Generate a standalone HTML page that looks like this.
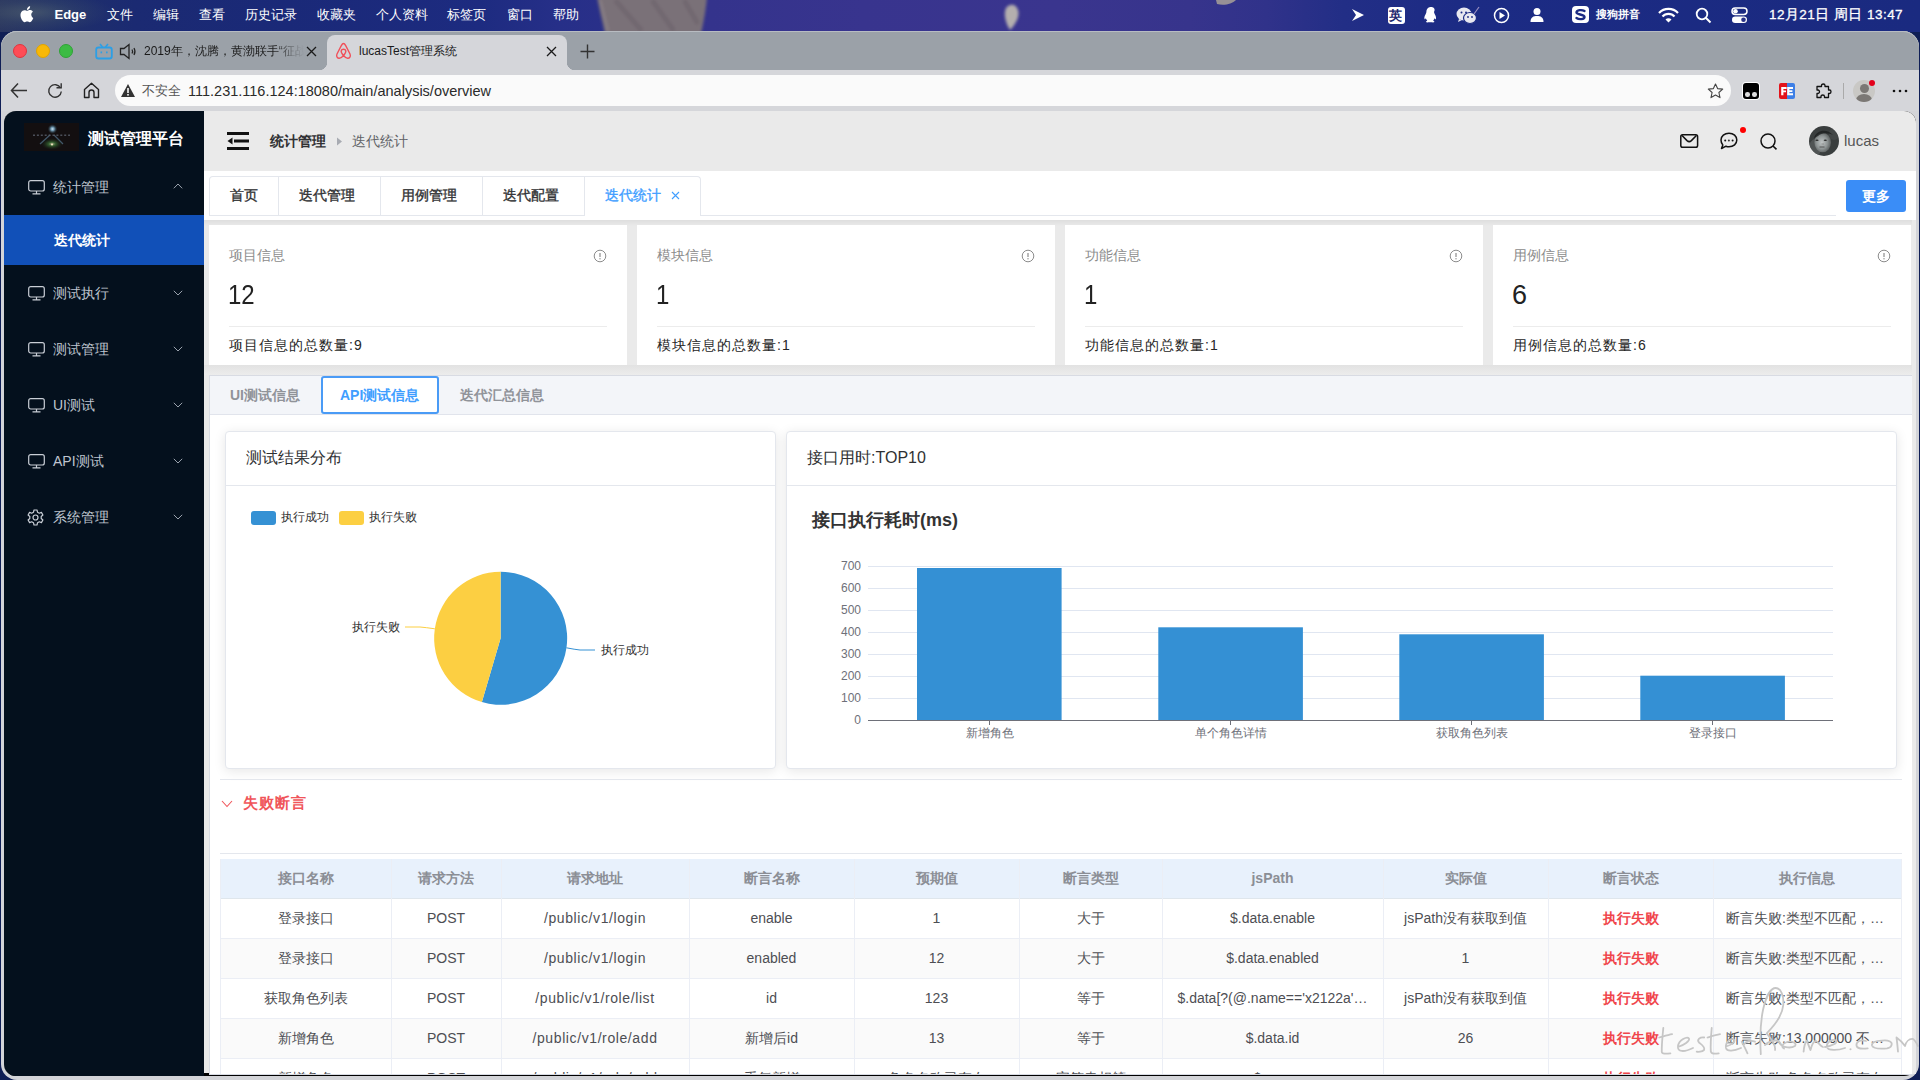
<!DOCTYPE html>
<html><head><meta charset="utf-8">
<style>
*{margin:0;padding:0;box-sizing:border-box}
html,body{width:1920px;height:1080px;overflow:hidden;font-family:"Liberation Sans",sans-serif;background:#0f1e55;position:relative}
.a{position:absolute}
.t{position:absolute;white-space:nowrap;line-height:1}
svg{position:absolute;overflow:visible}
.mb{top:8px;font-size:13px;color:#fff}
.side{color:#bfc5cf;font-size:14px}
.ci{fill:none;stroke:#c9ced6;stroke-width:1.2}
.th{font-weight:bold;color:#8b8e95;font-size:14px}
.td{color:#4d4e53;font-size:14px}
</style></head><body>
<!-- menu bar -->
<div class="a" style="left:0;top:0;width:1920px;height:32px;background:linear-gradient(90deg,#2a3660 0%,#203068 3%,#1b2a72 7%,#1a2978 15%,#1d2b80 25%,#262f88 29%,#2c308a 33%,#34338c 37%,#38348e 45%,#3a358e 55%,#37348c 62%,#30328a 66%,#222e86 70%,#1c2b84 76%,#1a2a80 100%)"></div>
<div class="a" style="left:0;top:0;width:110px;height:31px;background:radial-gradient(ellipse at 30% 40%,rgba(120,140,120,.35) 0%,rgba(80,100,110,.2) 40%,rgba(30,45,110,0) 75%)"></div>
<svg style="left:0;top:0" width="1920" height="31"><defs><filter id="bl" x="-20%" y="-20%" width="140%" height="140%"><feGaussianBlur stdDeviation="1.6"/></filter></defs><g filter="url(#bl)"><path d="M597 -3 H707 C706 8 704 20 701 34 H605 C602 20 599 8 597 -3Z" fill="#7a7178"/><path d="M615 0 L642 31 M652 0 L674 31 M684 0 L698 24" stroke="#6b6169" stroke-width="5" opacity=".55"/><path d="M600 0 L608 31" stroke="#958c94" stroke-width="2" opacity=".6"/></g><path d="M1006 8 C1010 3 1016 4 1018 10 C1020 16 1016 24 1010 30 C1006 24 1003 14 1006 8Z" fill="#c2bdb2" opacity=".9" filter="url(#bl)"/><path d="M1216 0 H1236 C1232 4 1224 6 1217 4Z" fill="#b0a898" opacity=".8"/></svg>
<svg style="left:20.2px;top:5.8px" width="13.6" height="16.2" viewBox="0 0 16 19"><path d="M13.2 10.1c0-2.3 1.9-3.4 2-3.5-1.1-1.6-2.8-1.8-3.4-1.8-1.4-.1-2.8.9-3.5.9-.7 0-1.8-.8-3-.8C3.7 4.9 2.2 5.8 1.4 7.2-.3 10.1 1 14.4 2.6 16.7c.8 1.1 1.7 2.4 2.9 2.3 1.2 0 1.6-.7 3-.7s1.8.7 3 .7c1.3 0 2.1-1.1 2.8-2.3.9-1.3 1.3-2.6 1.3-2.6s-2.4-1-2.4-4zM10.9 3.3c.6-.8 1.1-1.9 1-3-.9 0-2.1.6-2.7 1.4-.6.7-1.1 1.8-1 2.9 1 .1 2.1-.5 2.7-1.3z" fill="#fff"/></svg>
<div class="t mb" style="left:54.5px;font-weight:bold;font-size:13px;top:8px">Edge</div>
<div class="t mb" style="left:107px">文件</div>
<div class="t mb" style="left:153px">编辑</div>
<div class="t mb" style="left:199px">查看</div>
<div class="t mb" style="left:245px">历史记录</div>
<div class="t mb" style="left:317px">收藏夹</div>
<div class="t mb" style="left:376px">个人资料</div>
<div class="t mb" style="left:447px">标签页</div>
<div class="t mb" style="left:507px">窗口</div>
<div class="t mb" style="left:553px">帮助</div>
<div class="t mb" style="left:1769px;font-size:13.5px;letter-spacing:.45px;-webkit-text-stroke:.3px #fff">12月21日 周日 13:47</div>
<div class="t mb" style="left:1596px;font-size:11px;top:9px;font-weight:bold">搜狗拼音</div>
<!-- status icons -->
<svg style="left:1350px;top:8px" width="16" height="14"><path d="M2 1 L14 7 L2 13 L6 7 Z" fill="#fff"/></svg>
<div class="a" style="left:1388px;top:7px;width:17px;height:17px;background:#fff;border-radius:3px"></div>
<div class="t" style="left:1389px;top:9px;font-size:13px;color:#1e2a70;font-weight:bold">英</div>
<svg style="left:1422px;top:6px" width="18" height="19"><path d="M9 1c-3 0-4.6 2.3-4.6 5 0 .8-.4 1.4-.9 2.4-.7 1.3-1.6 3.2-.9 4.8.4.5.8-.5 1.2-.9.3 1 .8 1.8 1.5 2.4-.9.4-1.6.9-1.3 1.4.4.5 2 .4 3.3.2.5-.1 1.3-.1 1.8 0 1.3.2 2.9.3 3.3-.2.3-.5-.4-1-1.3-1.4.7-.6 1.2-1.4 1.5-2.4.4.4.8 1.4 1.2.9.7-1.6-.2-3.5-.9-4.8-.5-1-.9-1.6-.9-2.4C13.6 3.3 12 1 9 1z" fill="#fff"/></svg>
<svg style="left:1456px;top:6px" width="24" height="20"><ellipse cx="8" cy="8" rx="7.5" ry="6.5" fill="#e8e8f0"/><path d="M3 13 L2 16 L6 14Z" fill="#e8e8f0"/><ellipse cx="14" cy="12" rx="6.5" ry="5.5" fill="#e8e8f0" stroke="#1c2b84" stroke-width="1.2"/><circle cx="5.5" cy="6.5" r="1" fill="#1c2b84"/><circle cx="10" cy="6.5" r="1" fill="#1c2b84"/><circle cx="12" cy="11" r=".9" fill="#1c2b84"/><circle cx="16" cy="11" r=".9" fill="#1c2b84"/><path d="M18 8 L23 1" stroke="#9a8fc0" stroke-width="1.2"/></svg>
<svg style="left:1493px;top:7px" width="17" height="17"><circle cx="8.5" cy="8.5" r="7" fill="none" stroke="#fff" stroke-width="1.5"/><path d="M6.5 5 L12 8.5 L6.5 12Z" fill="#fff"/></svg>
<svg style="left:1529px;top:7px" width="16" height="16"><circle cx="8" cy="4.5" r="3.5" fill="#fff"/><path d="M1.5 15 C1.5 10 4.5 9 8 9 C11.5 9 14.5 10 14.5 15Z" fill="#fff"/></svg>
<div class="a" style="left:1572px;top:6px;width:17px;height:17px;background:#fff;border-radius:4px"></div>
<svg style="left:1572px;top:6px" width="17" height="17"><path d="M12.5 5 C10 3.5 4.5 3.8 4.5 6.5 C4.5 9 12.5 8 12.5 11 C12.5 13.5 7 13.8 4.5 12" fill="none" stroke="#1c2b84" stroke-width="2.4" stroke-linecap="round"/></svg>
<svg style="left:1658px;top:7px" width="21" height="16"><path d="M1 6 A13 13 0 0 1 20 6" fill="none" stroke="#fff" stroke-width="2.2"/><path d="M4.5 9.5 A8 8 0 0 1 16.5 9.5" fill="none" stroke="#fff" stroke-width="2.2"/><path d="M7.5 12.5 L10.5 15.5 L13.5 12.5 A4 4 0 0 0 7.5 12.5Z" fill="#fff"/></svg>
<svg style="left:1695px;top:7px" width="17" height="17"><circle cx="7" cy="7" r="5.3" fill="none" stroke="#fff" stroke-width="1.8"/><path d="M11 11 L15.5 15.5" stroke="#fff" stroke-width="2"/></svg>
<svg style="left:1731px;top:7px" width="17" height="17"><rect x="1" y="1" width="15" height="6.5" rx="3.2" fill="none" stroke="#fff" stroke-width="1.5"/><circle cx="4.5" cy="4.2" r="2.3" fill="#fff"/><rect x="1" y="9.5" width="15" height="6.5" rx="3.2" fill="#fff"/><circle cx="12.5" cy="12.7" r="2.3" fill="#2a3388"/></svg>
<!-- window frame -->
<div class="a" style="left:1px;top:31px;width:1918px;height:1049px;background:#d3d4d8;border-radius:16px 16px 16px 16px"></div>
<div class="a" style="left:1px;top:31px;width:1918px;height:39px;background:#9ba1a8;border-radius:16px 16px 0 0;box-shadow:inset 0 1px 0 #b8bcc2"></div>
<!-- traffic lights -->
<div class="a" style="left:13px;top:44px;width:14px;height:14px;border-radius:50%;background:#fe4c56;border:1px solid #e0343e"></div>
<div class="a" style="left:36px;top:44px;width:14px;height:14px;border-radius:50%;background:#f8b807;border:1px solid #e0a400"></div>
<div class="a" style="left:59px;top:44px;width:14px;height:14px;border-radius:50%;background:#3cbb44;border:1px solid #2ea336"></div>
<!-- inactive tab -->
<svg style="left:95px;top:43px" width="18" height="17"><rect x="1.2" y="4.5" width="15.6" height="11" rx="2.3" fill="none" stroke="#2c9fe6" stroke-width="1.8"/><path d="M5 1 L7.5 4 M13 1 L10.5 4" stroke="#2c9fe6" stroke-width="1.6"/><rect x="5.5" y="8.5" width="1.6" height="1.8" fill="#2c9fe6"/><rect x="11" y="8.5" width="1.6" height="1.8" fill="#2c9fe6"/></svg>
<svg style="left:119px;top:43px" width="20" height="17"><path d="M1.5 5.5 H5 L10 1.5 V15.5 L5 11.5 H1.5Z" fill="none" stroke="#222" stroke-width="1.3"/><path d="M13 6.5 Q14.2 8.5 13 10.5" fill="none" stroke="#222" stroke-width="1.2"/><path d="M15 5 Q17 8.5 15 12" fill="none" stroke="#222" stroke-width="1.2"/></svg>
<div class="t" style="left:144px;top:45px;font-size:12px;color:#1a1a1a;width:160px;overflow:hidden;-webkit-mask-image:linear-gradient(90deg,#000 80%,transparent 100%)">2019年，沈腾，黄渤联手“征战太空</div>
<svg style="left:306px;top:46px" width="11" height="11"><path d="M1 1 L10 10 M10 1 L1 10" stroke="#1a1a1a" stroke-width="1.3"/></svg>
<!-- active tab -->
<div class="a" style="left:327px;top:35px;width:240px;height:36px;background:#d5d6da;border-radius:8px 8px 0 0"></div>
<div class="a" style="left:319px;top:62px;width:8px;height:8px;background:radial-gradient(circle at 0 0,transparent 8px,#d5d6da 8.5px)"></div>
<div class="a" style="left:567px;top:62px;width:8px;height:8px;background:radial-gradient(circle at 100% 0,transparent 8px,#d5d6da 8.5px)"></div>
<svg style="left:335px;top:42px" width="17" height="18"><path d="M8.5 1.5 C7.5 1.5 7 2.3 6.3 3.6 L2 12 C1.2 13.7 1.8 16 4 16.3 C5.5 16.5 7 15.3 8.5 13.5 C10 15.3 11.5 16.5 13 16.3 C15.2 16 15.8 13.7 15 12 L10.7 3.6 C10 2.3 9.5 1.5 8.5 1.5Z M8.5 13.5 C6.7 11.3 6 9.8 6.2 8.8 C6.4 7.8 7.4 7.3 8.5 7.3 C9.6 7.3 10.6 7.8 10.8 8.8 C11 9.8 10.3 11.3 8.5 13.5Z" fill="none" stroke="#f0505a" stroke-width="1.4"/></svg>
<div class="t" style="left:359px;top:45px;font-size:12px;color:#1a1a1a">lucasTest管理系统</div>
<svg style="left:546px;top:46px" width="11" height="11"><path d="M1 1 L10 10 M10 1 L1 10" stroke="#1a1a1a" stroke-width="1.3"/></svg>
<svg style="left:580px;top:44px" width="15" height="15"><path d="M7.5 0.5 V14.5 M0.5 7.5 H14.5" stroke="#333" stroke-width="1.4"/></svg>
<!-- toolbar -->
<div class="a" style="left:1px;top:70px;width:1918px;height:41px;background:#d5d6da"></div>
<svg style="left:10px;top:82px" width="18" height="17"><path d="M8 1.5 L1.5 8.5 L8 15.5 M1.5 8.5 H17" fill="none" stroke="#333" stroke-width="1.5"/></svg>
<svg style="left:47px;top:82px" width="17" height="17"><path d="M13.6 6 A6.3 6.3 0 1 0 14.3 9.5" fill="none" stroke="#333" stroke-width="1.4"/><path d="M9.5 5.8 H14.2 V1.2" fill="none" stroke="#333" stroke-width="1.4"/></svg>
<svg style="left:83px;top:82px" width="17" height="17"><path d="M1.5 7.5 L8.5 1.3 L15.5 7.5 V15.5 H11 V10.5 A2.5 2.5 0 0 0 6 10.5 V15.5 H1.5Z" fill="none" stroke="#222" stroke-width="1.4" stroke-linejoin="round"/></svg>
<div class="a" style="left:115px;top:75px;width:1616px;height:31px;background:#fafafa;border-radius:15.5px"></div>
<svg style="left:120px;top:83px" width="16" height="15"><path d="M8 1 L15 14 H1Z" fill="#333"/><rect x="7.2" y="5" width="1.6" height="5" fill="#fafafa"/><rect x="7.2" y="11" width="1.6" height="1.6" fill="#fafafa"/></svg>
<div class="t" style="left:142px;top:85px;font-size:12.5px;color:#555">不安全</div>
<div class="t" style="left:188px;top:84px;font-size:14.5px;color:#2a2a2a">111.231.116.124:18080/main/analysis/overview</div>
<svg style="left:1707px;top:83px" width="17" height="16"><path d="M8.5 1 L10.6 5.6 L15.7 6.1 L11.9 9.5 L13 14.6 L8.5 12 L4 14.6 L5.1 9.5 L1.3 6.1 L6.4 5.6Z" fill="none" stroke="#444" stroke-width="1.1" stroke-linejoin="round"/></svg>
<div class="a" style="left:1743px;top:83px;width:16px;height:16px;background:#000;border-radius:3px;box-shadow:0 0 0 1px #fff"></div>
<div class="a" style="left:1745.3px;top:92.2px;width:4.6px;height:4.6px;border-radius:50%;background:#ddd"></div>
<div class="a" style="left:1752.3px;top:92.2px;width:4.6px;height:4.6px;border-radius:50%;background:#ddd"></div>
<div class="a" style="left:1779px;top:83px;width:16px;height:16px;background:linear-gradient(90deg,#e3141b 52%,#3d7fe6 52%);border-radius:2px"></div>
<svg style="left:1779px;top:83px" width="16" height="16"><path d="M2.2 4 H7.6 V6 H4.4 V7.4 H7 V9.3 H4.4 V12.2 H2.2Z" fill="#fff"/><path d="M8.2 4 H14 V6 H10.4 V7.2 H13.4 V9 H10.4 V10.2 H14 V12.2 H8.2Z" fill="#fff"/></svg>
<svg style="left:1815px;top:82px" width="17" height="18"><path d="M6.5 3.5 C6.5 1.5 10 1.5 10 3.5 V4.5 H13.5 V8 H14.5 C16.5 8 16.5 11.5 14.5 11.5 H13.5 V15.5 H9.5 V14.5 C9.5 12.5 6 12.5 6 14.5 V15.5 H2 V11.5 H3 C5 11.5 5 8 3 8 H2 V4.5 H6.5Z" fill="none" stroke="#111" stroke-width="1.3" stroke-linejoin="round"/></svg>
<div class="a" style="left:1843px;top:83px;width:1px;height:16px;background:#aaa"></div>
<div class="a" style="left:1853px;top:80px;width:22px;height:22px;border-radius:50%;background:#c9c8c5;overflow:hidden"><div class="a" style="left:6.5px;top:3.5px;width:9px;height:9px;border-radius:50%;background:#7b7875"></div><div class="a" style="left:3px;top:14px;width:16px;height:12px;border-radius:50%;background:#7b7875"></div></div>
<div class="a" style="left:1869px;top:80px;width:6px;height:6px;border-radius:50%;background:#e3001b"></div>
<svg style="left:1892px;top:89px" width="16" height="4"><circle cx="2" cy="2" r="1.3" fill="#111"/><circle cx="8" cy="2" r="1.3" fill="#111"/><circle cx="14" cy="2" r="1.3" fill="#111"/></svg>
<!-- app content frame -->
<div class="a" style="left:4px;top:111px;width:1912px;height:965px;background:#000;border-radius:12px 12px 12px 12px;overflow:hidden">
  <div class="a" style="left:0;top:0;width:1912px;height:962.4px;background:#eaeaea"></div>
  <div class="a" style="left:0;top:0;width:200px;height:965px;background:#04101d"></div>
</div>
<!-- sidebar -->
<svg style="left:24px;top:123px" width="55" height="28"><defs><radialGradient id="lg1" cx="50%" cy="50%" r="50%"><stop offset="0" stop-color="#d0e4f0"/><stop offset=".35" stop-color="#6f98b0"/><stop offset="1" stop-color="#1a2a34" stop-opacity="0"/></radialGradient><radialGradient id="lg2" cx="50%" cy="50%" r="50%"><stop offset="0" stop-color="#e8e0b8"/><stop offset=".3" stop-color="#3e7a3a"/><stop offset="1" stop-color="#142014" stop-opacity="0"/></radialGradient></defs><rect width="55" height="28" fill="#130f10"/><ellipse cx="28" cy="21" rx="11" ry="6" fill="url(#lg2)" opacity=".75"/><path d="M26 12 L16 21 M30 12 L39 21" stroke="#4a6478" stroke-width="1.3" opacity=".85"/><ellipse cx="28.5" cy="6" rx="5" ry="5" fill="url(#lg1)"/><path d="M9 12.3 H46" stroke="#5a606c" stroke-width="1.4" stroke-dasharray="2 1.9" opacity=".8"/><circle cx="28" cy="21.5" r="1" fill="#f0e8c0"/></svg>
<div class="t" style="left:88px;top:130.5px;font-size:16px;font-weight:bold;color:#fff">测试管理平台</div>

<svg style="left:28px;top:180px" width="17" height="15"><rect x="0.7" y="0.7" width="15.6" height="10.3" rx="2" class="ci"/><path d="M8.5 11 V13.8 M4.5 13.8 H12.5" class="ci"/></svg>
<div class="t side" style="left:53px;top:180px">统计管理</div>
<svg style="left:173px;top:183px" width="10" height="6"><path d="M0.8 5.3 L5 1 L9.2 5.3" fill="none" stroke="#9aa2ad" stroke-width="1"/></svg>
<div class="a" style="left:4px;top:215px;width:200px;height:50px;background:#1150b8"></div>
<div class="t" style="left:54px;top:233px;font-size:14px;color:#fff;font-weight:bold">迭代统计</div>

<svg style="left:28px;top:286px" width="17" height="15"><rect x="0.7" y="0.7" width="15.6" height="10.3" rx="2" class="ci"/><path d="M8.5 11 V13.8 M4.5 13.8 H12.5" class="ci"/></svg>
<div class="t side" style="left:53px;top:286px">测试执行</div>
<svg style="left:173px;top:290px" width="10" height="6"><path d="M0.8 0.8 L5 5 L9.2 0.8" fill="none" stroke="#9aa2ad" stroke-width="1"/></svg>

<svg style="left:28px;top:342px" width="17" height="15"><rect x="0.7" y="0.7" width="15.6" height="10.3" rx="2" class="ci"/><path d="M8.5 11 V13.8 M4.5 13.8 H12.5" class="ci"/></svg>
<div class="t side" style="left:53px;top:342px">测试管理</div>
<svg style="left:173px;top:346px" width="10" height="6"><path d="M0.8 0.8 L5 5 L9.2 0.8" fill="none" stroke="#9aa2ad" stroke-width="1"/></svg>

<svg style="left:28px;top:398px" width="17" height="15"><rect x="0.7" y="0.7" width="15.6" height="10.3" rx="2" class="ci"/><path d="M8.5 11 V13.8 M4.5 13.8 H12.5" class="ci"/></svg>
<div class="t side" style="left:53px;top:398px">UI测试</div>
<svg style="left:173px;top:402px" width="10" height="6"><path d="M0.8 0.8 L5 5 L9.2 0.8" fill="none" stroke="#9aa2ad" stroke-width="1"/></svg>

<svg style="left:28px;top:454px" width="17" height="15"><rect x="0.7" y="0.7" width="15.6" height="10.3" rx="2" class="ci"/><path d="M8.5 11 V13.8 M4.5 13.8 H12.5" class="ci"/></svg>
<div class="t side" style="left:53px;top:454px">API测试</div>
<svg style="left:173px;top:458px" width="10" height="6"><path d="M0.8 0.8 L5 5 L9.2 0.8" fill="none" stroke="#9aa2ad" stroke-width="1"/></svg>

<svg style="left:27px;top:509px" width="17" height="17"><path d="M7 1 H10 L10.5 3.2 L12.3 4.2 L14.4 3.4 L15.9 6 L14.2 7.5 V9.5 L15.9 11 L14.4 13.6 L12.3 12.8 L10.5 13.8 L10 16 H7 L6.5 13.8 L4.7 12.8 L2.6 13.6 L1.1 11 L2.8 9.5 V7.5 L1.1 6 L2.6 3.4 L4.7 4.2 L6.5 3.2Z" class="ci" stroke-linejoin="round"/><circle cx="8.5" cy="8.5" r="2.5" class="ci"/></svg>
<div class="t side" style="left:53px;top:510px">系统管理</div>
<svg style="left:173px;top:514px" width="10" height="6"><path d="M0.8 0.8 L5 5 L9.2 0.8" fill="none" stroke="#9aa2ad" stroke-width="1"/></svg>

<!-- header -->
<svg style="left:227px;top:132px" width="22" height="18"><rect x="0" y="0" width="22" height="3" fill="#111"/><rect x="7" y="7.5" width="15" height="3" fill="#111"/><rect x="0" y="15" width="22" height="3" fill="#111"/><path d="M5.5 5.5 L0.5 9 L5.5 12.5Z" fill="#111"/></svg>
<div class="t" style="left:270px;top:134px;font-size:14px;font-weight:bold;color:#303133">统计管理</div>
<svg style="left:336px;top:137px" width="7" height="9"><path d="M1 0.5 L6 4.5 L1 8.5Z" fill="#a8abb2"/></svg>
<div class="t" style="left:352px;top:134px;font-size:14px;color:#606266">迭代统计</div>

<svg style="left:1680px;top:134px" width="19" height="14"><rect x="0.8" y="0.8" width="16.8" height="12.4" rx="1.8" fill="none" stroke="#111" stroke-width="1.5"/><path d="M2 1.5 L7 6.6 Q9.2 8.6 11.4 6.6 L16.4 1.5" fill="none" stroke="#111" stroke-width="1.5"/></svg>
<svg style="left:1719px;top:132px" width="20" height="18"><path d="M10 1.2 C14.5 1.2 17.8 4.2 17.8 8 C17.8 11.8 14.5 14.8 10 14.8 C8.9 14.8 7.9 14.6 7 14.2 L2.5 16.5 L3.8 13 C2.6 11.7 2 10 2 8 C2 4.2 5.5 1.2 10 1.2Z" fill="none" stroke="#111" stroke-width="1.5" stroke-linejoin="round"/><circle cx="6.2" cy="8.6" r="1" fill="#111"/><circle cx="9.9" cy="8.6" r="1" fill="#333"/><circle cx="13.6" cy="8.6" r="1" fill="#111"/></svg>
<div class="a" style="left:1740px;top:127px;width:6px;height:6px;border-radius:50%;background:#f00"></div>
<svg style="left:1760px;top:133px" width="19" height="17"><circle cx="8" cy="8" r="7" fill="none" stroke="#111" stroke-width="1.5"/><path d="M13 13 L16.5 16.3" stroke="#111" stroke-width="1.6"/></svg>
<svg style="left:1809px;top:126px" width="30" height="30"><defs><radialGradient id="fc" cx="45%" cy="50%" r="55%"><stop offset="0" stop-color="#c0c4c4"/><stop offset=".6" stop-color="#8e9494"/><stop offset="1" stop-color="#5a5e5e"/></radialGradient><clipPath id="cc"><circle cx="15" cy="15" r="15"/></clipPath></defs><g clip-path="url(#cc)"><rect width="30" height="30" fill="#3a3e3e"/><ellipse cx="6" cy="22" rx="6" ry="9" fill="#5a5e5e" opacity=".7"/><ellipse cx="25" cy="8" rx="5" ry="6" fill="#4a4e4e" opacity=".6"/><ellipse cx="13.7" cy="16.5" rx="8.3" ry="9.8" fill="url(#fc)"/><path d="M5 12 C7 4 18 2 24 9 C20 7 13 6 9 10Z" fill="#1e2020" opacity=".8"/><ellipse cx="8" cy="14.3" rx="1.6" ry=".8" fill="#2a2a2a"/><ellipse cx="16.3" cy="14.3" rx="1.6" ry=".8" fill="#2a2a2a"/><path d="M10.5 21 H15.5" stroke="#444" stroke-width=".8"/><path d="M12.5 18 H15" stroke="#777" stroke-width=".6"/></g></svg>
<div class="t" style="left:1844px;top:133px;font-size:15px;color:#555">lucas</div>
<!-- tabs row -->
<div class="a" style="left:204px;top:171px;width:1712px;height:49px;background:#fff"></div>
<div class="a" style="left:209px;top:176px;width:492px;height:40px;border:1px solid #e4e7ed;border-bottom:none;border-radius:4px 4px 0 0;background:#fff"></div>
<div class="a" style="left:278px;top:176px;width:1px;height:40px;background:#e4e7ed"></div>
<div class="a" style="left:380px;top:176px;width:1px;height:40px;background:#e4e7ed"></div>
<div class="a" style="left:482px;top:176px;width:1px;height:40px;background:#e4e7ed"></div>
<div class="a" style="left:584px;top:176px;width:1px;height:40px;background:#e4e7ed"></div>
<div class="a" style="left:209px;top:215px;width:375px;height:1px;background:#e4e7ed"></div>
<div class="a" style="left:700px;top:215px;width:1136px;height:1px;background:#e4e7ed"></div>
<div class="t" style="left:230px;top:188px;font-size:14px;color:#303133;-webkit-text-stroke:.35px #303133">首页</div>
<div class="t" style="left:299px;top:188px;font-size:14px;color:#303133;-webkit-text-stroke:.35px #303133">迭代管理</div>
<div class="t" style="left:401px;top:188px;font-size:14px;color:#303133;-webkit-text-stroke:.35px #303133">用例管理</div>
<div class="t" style="left:503px;top:188px;font-size:14px;color:#303133;-webkit-text-stroke:.35px #303133">迭代配置</div>
<div class="t" style="left:605px;top:188px;font-size:14px;color:#409eff;-webkit-text-stroke:.35px #409eff">迭代统计</div>
<svg style="left:671px;top:191px" width="9" height="9"><path d="M1 1 L8 8 M8 1 L1 8" stroke="#409eff" stroke-width="1.1"/></svg>
<div class="a" style="left:1846px;top:180px;width:60px;height:32px;background:#3a8df7;border-radius:3px"></div>
<div class="t" style="left:1862px;top:189px;font-size:14px;color:#fff;font-weight:bold">更多</div>

<!-- info cards -->
<div class="a" style="left:204px;top:220px;width:1712px;height:6px;background:linear-gradient(180deg,#dedede,#eaeaea)"></div>
<div class="a" style="left:204px;top:365px;width:1712px;height:10px;background:linear-gradient(180deg,#e2e2e2,#ececec)"></div>
<div class="a" style="left:209px;top:225px;width:418px;height:140px;background:#fff"></div>
<div class="a" style="left:637px;top:225px;width:418px;height:140px;background:#fff"></div>
<div class="a" style="left:1065px;top:225px;width:418px;height:140px;background:#fff"></div>
<div class="a" style="left:1493px;top:225px;width:418px;height:140px;background:#fff"></div>

<div class="t" style="left:229px;top:248px;font-size:14px;color:#8c8c8c">项目信息</div>
<div class="t" style="left:657px;top:248px;font-size:14px;color:#8c8c8c">模块信息</div>
<div class="t" style="left:1085px;top:248px;font-size:14px;color:#8c8c8c">功能信息</div>
<div class="t" style="left:1513px;top:248px;font-size:14px;color:#8c8c8c">用例信息</div>

<svg style="left:593px;top:249px" width="14" height="14"><circle cx="7" cy="7" r="5.8" fill="none" stroke="#8c8c8c" stroke-width="1"/><path d="M7 4 V8" stroke="#8c8c8c" stroke-width="1.2"/><circle cx="7" cy="9.8" r=".7" fill="#8c8c8c"/></svg>
<svg style="left:1021px;top:249px" width="14" height="14"><circle cx="7" cy="7" r="5.8" fill="none" stroke="#8c8c8c" stroke-width="1"/><path d="M7 4 V8" stroke="#8c8c8c" stroke-width="1.2"/><circle cx="7" cy="9.8" r=".7" fill="#8c8c8c"/></svg>
<svg style="left:1449px;top:249px" width="14" height="14"><circle cx="7" cy="7" r="5.8" fill="none" stroke="#8c8c8c" stroke-width="1"/><path d="M7 4 V8" stroke="#8c8c8c" stroke-width="1.2"/><circle cx="7" cy="9.8" r=".7" fill="#8c8c8c"/></svg>
<svg style="left:1877px;top:249px" width="14" height="14"><circle cx="7" cy="7" r="5.8" fill="none" stroke="#8c8c8c" stroke-width="1"/><path d="M7 4 V8" stroke="#8c8c8c" stroke-width="1.2"/><circle cx="7" cy="9.8" r=".7" fill="#8c8c8c"/></svg>

<div class="t" style="left:228px;top:281.5px;font-size:27px;color:#222;transform:scaleX(.89);transform-origin:0 0">12</div>
<div class="t" style="left:656px;top:281.5px;font-size:27px;color:#222;transform:scaleX(.89);transform-origin:0 0">1</div>
<div class="t" style="left:1084px;top:281.5px;font-size:27px;color:#222;transform:scaleX(.89);transform-origin:0 0">1</div>
<div class="t" style="left:1512px;top:281.5px;font-size:27px;color:#222">6</div>

<div class="a" style="left:229px;top:326px;width:378px;height:1px;background:#ececec"></div>
<div class="a" style="left:657px;top:326px;width:378px;height:1px;background:#ececec"></div>
<div class="a" style="left:1085px;top:326px;width:378px;height:1px;background:#ececec"></div>
<div class="a" style="left:1513px;top:326px;width:378px;height:1px;background:#ececec"></div>

<div class="t" style="left:229px;top:338px;font-size:14px;color:#262626;letter-spacing:1px">项目信息的总数量:9</div>
<div class="t" style="left:657px;top:338px;font-size:14px;color:#262626;letter-spacing:1px">模块信息的总数量:1</div>
<div class="t" style="left:1085px;top:338px;font-size:14px;color:#262626;letter-spacing:1px">功能信息的总数量:1</div>
<div class="t" style="left:1513px;top:338px;font-size:14px;color:#262626;letter-spacing:1px">用例信息的总数量:6</div>

<!-- sub tabs (border-card) -->
<div class="a" style="left:209px;top:375px;width:1704px;height:700px;background:#fff;border:1px solid #d8dbe3"></div>
<div class="a" style="left:210px;top:376px;width:1702px;height:39px;background:#f3f5f9;border-bottom:1px solid #e1e4ec"></div>
<div class="a" style="left:321px;top:376px;width:118px;height:38px;background:#fff;border:2px solid #4a9bf6;border-radius:3px"></div>
<div class="t" style="left:230px;top:388px;font-size:14px;color:#909399;font-weight:bold">UI测试信息</div>
<div class="t" style="left:340px;top:388px;font-size:14px;color:#409eff;font-weight:bold">API测试信息</div>
<div class="t" style="left:460px;top:388px;font-size:14px;color:#909399;font-weight:bold">迭代汇总信息</div>

<!-- chart cards -->
<div class="a" style="left:225px;top:431px;width:551px;height:338px;background:#fff;border:1px solid #e4e7ed;border-radius:4px;box-shadow:0 2px 12px 0 rgba(0,0,0,.1)"></div>
<div class="a" style="left:226px;top:485px;width:549px;height:1px;background:#e4e7ed"></div>
<div class="t" style="left:246px;top:450px;font-size:16px;color:#303133">测试结果分布</div>

<div class="a" style="left:786px;top:431px;width:1111px;height:338px;background:#fff;border:1px solid #e4e7ed;border-radius:4px;box-shadow:0 2px 12px 0 rgba(0,0,0,.1)"></div>
<div class="a" style="left:787px;top:485px;width:1109px;height:1px;background:#e4e7ed"></div>
<div class="t" style="left:807px;top:450px;font-size:16px;color:#303133">接口用时:TOP10</div>
<!-- pie chart -->
<svg style="left:0;top:0" width="1920" height="1080">
  <rect x="251" y="511" width="25" height="14" rx="3" fill="#3591d4"/>
  <rect x="339" y="511" width="25" height="14" rx="3" fill="#fccf42"/>
  <path d="M500.6 638.3 L500.6 571.8 A66.5 66.5 0 1 1 481.9 702.1 Z" fill="#3591d4"/>
  <path d="M500.6 638.3 L481.9 702.1 A66.5 66.5 0 0 1 500.6 571.8 Z" fill="#fccf42"/>
  <path d="M566.4 647.8 Q575 649.5 580 650 L595 650" fill="none" stroke="#3591d4" stroke-width="1"/>
  <path d="M434.8 628.8 Q426 627.5 420 627 L405 627" fill="none" stroke="#fccf42" stroke-width="1"/>
  <!-- bar chart grid -->
  <g stroke="#e0e6f1" stroke-width="1">
    <path d="M868 566.5 H1833 M868 588.5 H1833 M868 610.5 H1833 M868 632.5 H1833 M868 654.5 H1833 M868 676.5 H1833 M868 698.5 H1833"/>
  </g>
  <rect x="917" y="568" width="144.6" height="152" fill="#3490d4"/>
  <rect x="1158.3" y="627.3" width="144.6" height="92.7" fill="#3490d4"/>
  <rect x="1399.3" y="634.3" width="144.6" height="85.7" fill="#3490d4"/>
  <rect x="1640.3" y="675.7" width="144.6" height="44.3" fill="#3490d4"/>
  <path d="M868 720.5 H1833" stroke="#6e7079" stroke-width="1"/>
  <path d="M989.5 720 V725 M1230.5 720 V725 M1471.5 720 V725 M1712.5 720 V725" stroke="#6e7079" stroke-width="1"/>
</svg>
<div class="t" style="left:281px;top:511px;font-size:12px;color:#333">执行成功</div>
<div class="t" style="left:369px;top:511px;font-size:12px;color:#333">执行失败</div>
<div class="t" style="left:601px;top:644px;font-size:12px;color:#333">执行成功</div>
<div class="t" style="left:352px;top:621px;font-size:12px;color:#333">执行失败</div>

<div class="t" style="left:812px;top:511px;font-size:18px;font-weight:bold;color:#333">接口执行耗时(ms)</div>
<div class="a" style="left:800px;top:560px;width:61px;text-align:right;font-size:12px;color:#6e7079;line-height:1">
  <div style="position:absolute;right:0;top:0">700</div>
  <div style="position:absolute;right:0;top:22px">600</div>
  <div style="position:absolute;right:0;top:44px">500</div>
  <div style="position:absolute;right:0;top:66px">400</div>
  <div style="position:absolute;right:0;top:88px">300</div>
  <div style="position:absolute;right:0;top:110px">200</div>
  <div style="position:absolute;right:0;top:132px">100</div>
  <div style="position:absolute;right:0;top:154px">0</div>
</div>
<div class="t" style="left:939.5px;top:727px;width:100px;text-align:center;font-size:12px;color:#6e7079">新增角色</div>
<div class="t" style="left:1180.5px;top:727px;width:100px;text-align:center;font-size:12px;color:#6e7079">单个角色详情</div>
<div class="t" style="left:1421.5px;top:727px;width:100px;text-align:center;font-size:12px;color:#6e7079">获取角色列表</div>
<div class="t" style="left:1662.5px;top:727px;width:100px;text-align:center;font-size:12px;color:#6e7079">登录接口</div>

<!-- collapse -->
<div class="a" style="left:220px;top:779px;width:1682px;height:1px;background:#e4e7ed"></div>
<svg style="left:221px;top:800px" width="12" height="8"><path d="M1 1 L6 6.5 L11 1" fill="none" stroke="#f0555a" stroke-width="1.1"/></svg>
<div class="t" style="left:243px;top:796px;font-size:14.5px;color:#f0555a;font-weight:bold;letter-spacing:.9px">失败断言</div>
<div class="a" style="left:220px;top:853px;width:1682px;height:1px;background:#e4e7ed"></div>
<!-- table -->
<div class="a" style="left:204px;top:859px;width:1712px;height:215px;overflow:hidden">
<div class="a" style="left:16px;top:0;width:1681px;height:40px;background:#e8f1fc;border-bottom:1px solid #dfe6ec"></div>
<div class="a" style="left:16px;top:40px;width:1681px;height:40px;background:#fff;border-bottom:1px solid #ebeef5"></div>
<div class="a" style="left:16px;top:80px;width:1681px;height:40px;background:#fafafa;border-bottom:1px solid #ebeef5"></div>
<div class="a" style="left:16px;top:120px;width:1681px;height:40px;background:#fff;border-bottom:1px solid #ebeef5"></div>
<div class="a" style="left:16px;top:160px;width:1681px;height:40px;background:#fafafa;border-bottom:1px solid #ebeef5"></div>
<div class="a" style="left:16px;top:200px;width:1681px;height:40px;background:#fff;border-bottom:1px solid #ebeef5"></div>
<div class="a" style="left:187px;top:0;width:1px;height:260px;background:#ebeef5"></div>
<div class="a" style="left:297px;top:0;width:1px;height:260px;background:#ebeef5"></div>
<div class="a" style="left:485px;top:0;width:1px;height:260px;background:#ebeef5"></div>
<div class="a" style="left:650px;top:0;width:1px;height:260px;background:#ebeef5"></div>
<div class="a" style="left:815px;top:0;width:1px;height:260px;background:#ebeef5"></div>
<div class="a" style="left:958px;top:0;width:1px;height:260px;background:#ebeef5"></div>
<div class="a" style="left:1179px;top:0;width:1px;height:260px;background:#ebeef5"></div>
<div class="a" style="left:1344px;top:0;width:1px;height:260px;background:#ebeef5"></div>
<div class="a" style="left:1509px;top:0;width:1px;height:260px;background:#ebeef5"></div>
<div class="a" style="left:16px;top:0;width:1px;height:260px;background:#ebeef5"></div>
<div class="a" style="left:1697px;top:0;width:1px;height:260px;background:#ebeef5"></div>
<div class="t th" style="left:16px;top:12px;width:171px;text-align:center">接口名称</div>
<div class="t th" style="left:187px;top:12px;width:110px;text-align:center">请求方法</div>
<div class="t th" style="left:297px;top:12px;width:188px;text-align:center">请求地址</div>
<div class="t th" style="left:485px;top:12px;width:165px;text-align:center">断言名称</div>
<div class="t th" style="left:650px;top:12px;width:165px;text-align:center">预期值</div>
<div class="t th" style="left:815px;top:12px;width:143px;text-align:center">断言类型</div>
<div class="t th" style="left:958px;top:12px;width:221px;text-align:center">jsPath</div>
<div class="t th" style="left:1179px;top:12px;width:165px;text-align:center">实际值</div>
<div class="t th" style="left:1344px;top:12px;width:165px;text-align:center">断言状态</div>
<div class="t th" style="left:1509px;top:12px;width:188px;text-align:center">执行信息</div>
<div class="t td" style="left:16px;top:52px;width:171px;text-align:center;">登录接口</div>
<div class="t td" style="left:187px;top:52px;width:110px;text-align:center;">POST</div>
<div class="t td" style="left:297px;top:52px;width:188px;text-align:center;letter-spacing:.6px;">/public/v1/login</div>
<div class="t td" style="left:485px;top:52px;width:165px;text-align:center;">enable</div>
<div class="t td" style="left:650px;top:52px;width:165px;text-align:center;">1</div>
<div class="t td" style="left:815px;top:52px;width:143px;text-align:center;">大于</div>
<div class="t td" style="left:958px;top:52px;width:221px;text-align:center;">$.data.enable</div>
<div class="t td" style="left:1179px;top:52px;width:165px;text-align:center;">jsPath没有获取到值</div>
<div class="t td" style="left:1344px;top:52px;width:165px;text-align:center;color:#f0454b;font-weight:bold;">执行失败</div>
<div class="t td" style="left:1522px;top:52px;width:162px;text-align:left;">断言失败:类型不匹配，…</div>
<div class="t td" style="left:16px;top:92px;width:171px;text-align:center;">登录接口</div>
<div class="t td" style="left:187px;top:92px;width:110px;text-align:center;">POST</div>
<div class="t td" style="left:297px;top:92px;width:188px;text-align:center;letter-spacing:.6px;">/public/v1/login</div>
<div class="t td" style="left:485px;top:92px;width:165px;text-align:center;">enabled</div>
<div class="t td" style="left:650px;top:92px;width:165px;text-align:center;">12</div>
<div class="t td" style="left:815px;top:92px;width:143px;text-align:center;">大于</div>
<div class="t td" style="left:958px;top:92px;width:221px;text-align:center;">$.data.enabled</div>
<div class="t td" style="left:1179px;top:92px;width:165px;text-align:center;">1</div>
<div class="t td" style="left:1344px;top:92px;width:165px;text-align:center;color:#f0454b;font-weight:bold;">执行失败</div>
<div class="t td" style="left:1522px;top:92px;width:162px;text-align:left;">断言失败:类型不匹配，…</div>
<div class="t td" style="left:16px;top:132px;width:171px;text-align:center;">获取角色列表</div>
<div class="t td" style="left:187px;top:132px;width:110px;text-align:center;">POST</div>
<div class="t td" style="left:297px;top:132px;width:188px;text-align:center;letter-spacing:.6px;">/public/v1/role/list</div>
<div class="t td" style="left:485px;top:132px;width:165px;text-align:center;">id</div>
<div class="t td" style="left:650px;top:132px;width:165px;text-align:center;">123</div>
<div class="t td" style="left:815px;top:132px;width:143px;text-align:center;">等于</div>
<div class="t td" style="left:958px;top:132px;width:221px;text-align:center;">$.data[?(@.name==&#39;x2122a&#39;…</div>
<div class="t td" style="left:1179px;top:132px;width:165px;text-align:center;">jsPath没有获取到值</div>
<div class="t td" style="left:1344px;top:132px;width:165px;text-align:center;color:#f0454b;font-weight:bold;">执行失败</div>
<div class="t td" style="left:1522px;top:132px;width:162px;text-align:left;">断言失败:类型不匹配，…</div>
<div class="t td" style="left:16px;top:172px;width:171px;text-align:center;">新增角色</div>
<div class="t td" style="left:187px;top:172px;width:110px;text-align:center;">POST</div>
<div class="t td" style="left:297px;top:172px;width:188px;text-align:center;letter-spacing:.6px;">/public/v1/role/add</div>
<div class="t td" style="left:485px;top:172px;width:165px;text-align:center;">新增后id</div>
<div class="t td" style="left:650px;top:172px;width:165px;text-align:center;">13</div>
<div class="t td" style="left:815px;top:172px;width:143px;text-align:center;">等于</div>
<div class="t td" style="left:958px;top:172px;width:221px;text-align:center;">$.data.id</div>
<div class="t td" style="left:1179px;top:172px;width:165px;text-align:center;">26</div>
<div class="t td" style="left:1344px;top:172px;width:165px;text-align:center;color:#f0454b;font-weight:bold;">执行失败</div>
<div class="t td" style="left:1522px;top:172px;width:162px;text-align:left;">断言失败:13.000000 不…</div>
<div class="t td" style="left:16px;top:212px;width:171px;text-align:center;">新增角色</div>
<div class="t td" style="left:187px;top:212px;width:110px;text-align:center;">POST</div>
<div class="t td" style="left:297px;top:212px;width:188px;text-align:center;letter-spacing:.6px;">/public/v1/role/add</div>
<div class="t td" style="left:485px;top:212px;width:165px;text-align:center;">重复新增</div>
<div class="t td" style="left:650px;top:212px;width:165px;text-align:center;">角色名称已存在</div>
<div class="t td" style="left:815px;top:212px;width:143px;text-align:center;">字符串相等</div>
<div class="t td" style="left:958px;top:212px;width:221px;text-align:center;">$.msg</div>
<div class="t td" style="left:1179px;top:212px;width:165px;text-align:center;"></div>
<div class="t td" style="left:1344px;top:212px;width:165px;text-align:center;color:#f0454b;font-weight:bold;">执行失败</div>
<div class="t td" style="left:1522px;top:212px;width:162px;text-align:left;">断言失败:角色名称已存在</div>
</div>
<!-- right window edge & watermark -->
<div class="a" style="left:1912px;top:220px;width:4px;height:854px;background:#eaeaea"></div>
<svg style="left:0;top:0" width="1920" height="1080"><g fill="none" stroke="#c6c6c6" stroke-width="1.8" stroke-linecap="round" stroke-linejoin="round">
<path d="M1663.3 1028 C1662.5 1036 1661.5 1046 1661.8 1052 C1662 1054 1666 1054 1670.4 1053.3"/>
<path d="M1659.2 1037.5 C1663 1036.5 1668 1035 1672.1 1034.2"/>
<path d="M1678 1047 C1684 1045 1690 1041 1689 1038.5 C1687 1036 1679 1040 1678 1046 C1677 1052 1684 1052.5 1693 1048"/>
<path d="M1704.2 1037.5 C1700 1037 1696.5 1039.5 1699 1042.5 C1702 1045 1705.5 1047 1704 1050 C1702 1052 1698 1052 1696.7 1051.7"/>
<path d="M1711.7 1028 C1711 1036 1710.5 1046 1710.8 1051.5 C1711.5 1054 1715 1054 1718.7 1053.3"/>
<path d="M1707.5 1037.5 C1711 1036.5 1716 1035 1720 1034.2"/>
<path d="M1726 1046.5 C1731 1045 1736 1042 1734 1039.5 C1731 1037.5 1725 1042 1726 1048 C1727 1052 1734 1051 1741 1048"/>
<path d="M1741.7 1041.7 C1744 1046 1746 1050 1747.5 1053.3 M1743.5 1045 C1746 1041 1751 1040 1755 1041.7"/>
<path d="M1760.8 1054.2 C1760 1040 1760.5 1022 1763 1010 C1766 996 1771 988 1775.8 988 C1781 988 1784 996 1783.3 1005 C1782.5 1014 1778 1022 1766.7 1033.3 C1771 1038 1776 1046 1775 1050"/>
<path d="M1765 1045 C1770 1040 1779 1039 1780 1043 C1781 1047 1790 1049 1795 1046 C1797 1043 1793 1041 1787 1042 C1782 1043.5 1781 1047 1784 1048.5"/>
<path d="M1803.6 1051.6 C1804 1047 1805 1043 1806.7 1040.6 C1808 1043 1809 1047 1810.5 1050 C1812 1044 1814 1041 1816 1041 C1818 1042 1820 1046 1823 1047"/>
<path d="M1825 1047 C1832 1046 1838 1043 1836 1040.5 C1833 1038.5 1826 1042 1827 1047 C1828 1051 1838 1050.5 1845 1048"/>
<path d="M1866 1041 C1860 1039 1856 1042 1856.5 1045.5 C1857 1049 1863 1049 1867.7 1048.4"/>
<path d="M1882 1040.6 C1875 1040.5 1871.5 1043 1872 1045.5 C1873 1048.5 1880 1049 1887 1048.4 C1892 1047.5 1893 1043 1890 1041.5 C1887 1040 1883 1040.4 1882 1040.6"/>
<path d="M1898 1051.6 C1897.5 1046 1897 1041 1896.5 1037.5 C1900 1040 1903 1043 1905 1046 C1906 1042 1909 1038.5 1913 1039 C1915 1040 1917 1044 1918 1046"/>
</g><circle cx="1850.5" cy="1049.2" r="1" fill="#c6c6c6"/></svg>
</body></html>
